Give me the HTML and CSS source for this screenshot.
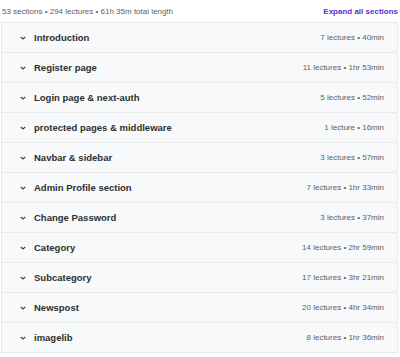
FILE: index.html
```html
<!DOCTYPE html>
<html lang="en">
<head>
    <meta charset="UTF-8">
    <meta name="viewport" content="width=device-width, initial-scale=1.0">
    <title>Course content</title>
    <link rel="stylesheet" href="styles.css">
</head>
<body>
    <div class="content-header">
        <span class="summary">53 sections • 294 lectures • 61h 35m total length</span>
        <button class="expand-all">Expand all sections</button>
    </div>

    <div class="sections" id="sections">
        <!-- section rows are added here -->
    </div>

    <script>
        const sections = [
            ['Introduction', '7 lectures • 40min'],
            ['Register page', '11 lectures • 1hr 53min'],
            ['Login page & next-auth', '5 lectures • 52min'],
            ['protected pages & middleware', '1 lecture • 16min'],
            ['Navbar & sidebar', '3 lectures • 57min'],
            ['Admin Profile section', '7 lectures • 1hr 33min'],
            ['Change Password', '3 lectures • 37min'],
            ['Category', '14 lectures • 2hr 59min'],
            ['Subcategory', '17 lectures • 3hr 21min'],
            ['Newspost', '20 lectures • 4hr 34min'],
            ['imagelib', '8 lectures • 1hr 36min']
        ];

        const list = document.getElementById('sections');

        sections.forEach(([title, meta]) => {
            const row = document.createElement('div');
            row.className = 'section-row';
            row.innerHTML = `
                <svg class="chevron" viewBox="0 0 10 10" width="10" height="10">
                    <path d="M2.8 4 L5 6 L7.2 4" fill="none" stroke="#3e4143" stroke-width="1.1"/>
                </svg>
                <span class="section-title">${title}</span>
                <span class="section-meta">${meta}</span>
            `;
            list.appendChild(row);
        });
    </script>
</body>
</html>
```

FILE: styles.css
```css
body {
    margin: 0;
    padding: 0 2px 0 1px;
    font-family: "Liberation Sans", Arial, sans-serif;
    background-color: #ffffff;
    color: #2d2f31;
}
.content-header {
    display: flex;
    justify-content: space-between;
    align-items: center;
    height: 22px;
    padding: 0 0 0 1px;
}
.summary {
    font-size: 8px;
    color: #5b5f63;
}
.expand-all {
    background: none;
    border: none;
    padding: 0;
    font-family: inherit;
    font-size: 8px;
    font-weight: bold;
    color: #5a2fd0;
    cursor: pointer;
}
.sections {
    border: 1px solid #e8eaec;
    border-bottom: none;
}
.section-row {
    display: flex;
    align-items: center;
    height: 29px;
    padding: 0 13px 0 16px;
    background-color: #f7f9fa;
    border-bottom: 1px solid #e8eaec;
}
.chevron {
    margin-right: 6px;
}
.section-title {
    flex: 1;
    font-size: 9.5px;
    font-weight: bold;
    color: #2d2f31;
}
.section-meta {
    font-size: 8px;
    color: #5b5f63;
}
```
